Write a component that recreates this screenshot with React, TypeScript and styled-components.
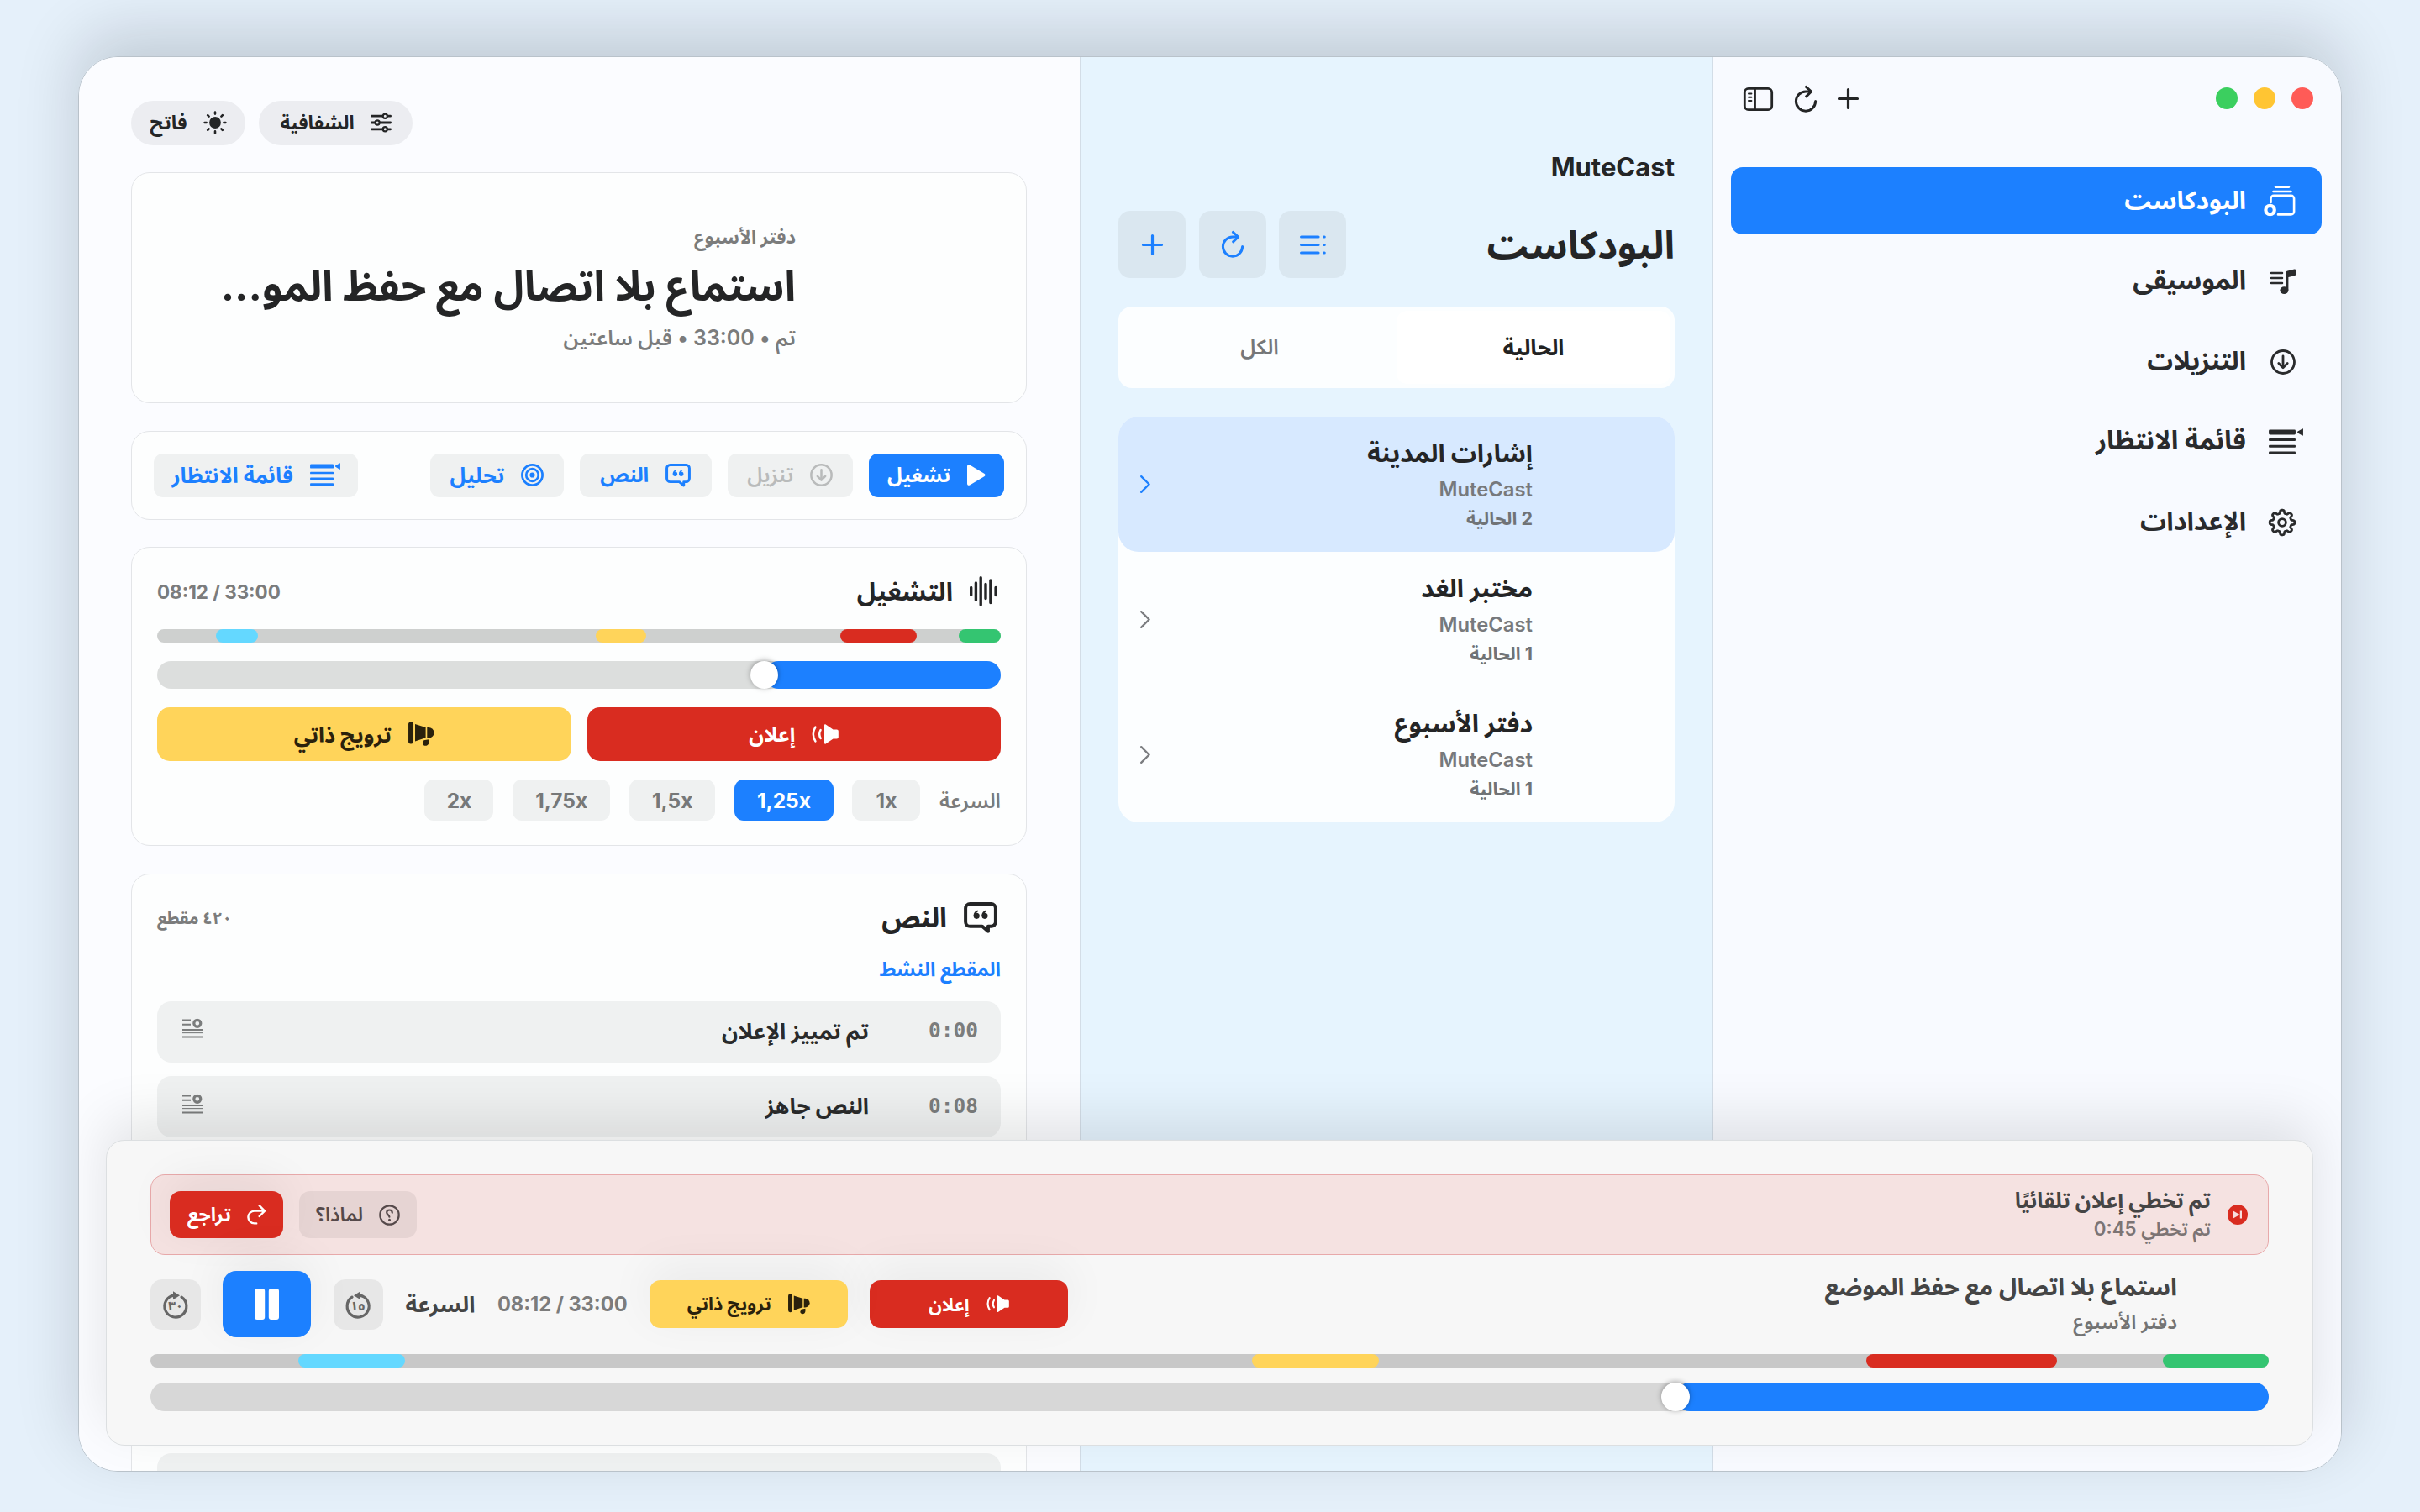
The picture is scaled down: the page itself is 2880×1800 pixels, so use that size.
import React from 'react';
import styled, { createGlobalStyle } from 'styled-components';

const BLUE = '#1c80ff';
const RED = '#d92c20';
const YELLOW = '#ffd45a';

const GlobalStyle = createGlobalStyle`
    * {
        box-sizing: border-box;
    }
    body {
        margin: 0;
        background: #e5f0fa;
        font-family: Inter, "Noto Sans Arabic", "DejaVu Sans", sans-serif;
        color: #242526;
        -webkit-font-smoothing: antialiased;
    }
    button {
        font-family: inherit;
        border: none;
        margin: 0;
        padding: 0;
        color: inherit;
        cursor: pointer;
    }
`;

/* ---------- shell ---------- */

const Page = styled.div`
    width: 2880px;
    height: 1800px;
    padding: 67px 93px 48px;
    overflow: hidden;
    direction: rtl;
`;

const Window = styled.div`
    position: relative;
    width: 2694px;
    height: 1685px;
    display: grid;
    grid-template-columns: 747px 754px 1fr;
    border: 1px solid #b9c2ca;
    border-radius: 47px;
    overflow: hidden;
    box-shadow: 0 -26px 76px rgba(0, 10, 25, 0.16);
`;

const Text = styled.span<{ size: number; weight?: number; tone?: string; lh?: number; ltr?: boolean }>`
    display: block;
    flex: none;
    font-size: ${p => p.size}px;
    font-weight: ${p => p.weight ?? 700};
    line-height: ${p => p.lh ?? Math.round(p.size * 1.4)}px;
    color: ${p => p.tone ?? 'inherit'};
    direction: ${p => (p.ltr ? 'ltr' : 'rtl')};
    white-space: nowrap;
`;

const Svg = styled.svg`
    display: block;
    flex: none;
    overflow: visible;
`;

/* ---------- sidebar ---------- */

const Sidebar = styled.aside`
    background: #f8faff;
    padding: 0 23px 0 21px;
`;

const TitleBar = styled.div`
    height: 131px;
    padding: 34px 10px 0 15px;
    display: flex;
    align-items: flex-start;
    justify-content: space-between;
`;

const Lights = styled.div`
    display: flex;
    gap: 19px;
    padding-top: 2px;
`;

const Light = styled.span<{ bg: string }>`
    width: 26px;
    height: 26px;
    border-radius: 50%;
    background: ${p => p.bg};
`;

const TitleTools = styled.div`
    height: 31px;
    display: flex;
    align-items: center;
    gap: 25.5px;
`;

const Nav = styled.nav`
    display: flex;
    flex-direction: column;
    gap: 15.5px;
`;

const NavItem = styled.div<{ active?: boolean }>`
    height: 80px;
    display: flex;
    align-items: center;
    padding: 0 22px 3px 0;
    border-radius: 14px;
    background: ${p => (p.active ? BLUE : 'transparent')};
    color: ${p => (p.active ? '#fff' : '#2a2b2d')};
`;

const NavIcon = styled.span<{ wide?: boolean }>`
    width: 68px;
    padding-top: 4px;
    padding-right: ${p => (p.wide ? 0 : 9)}px;
`;

/* ---------- podcast list ---------- */

const ListPane = styled.section`
    background: #e6f4fe;
    border-right: 1px solid #d3dde7;
    border-left: 1px solid #d3dde7;
    padding: 111px 45px 0 45px;
`;

const ListHeader = styled.div`
    height: 80px;
    margin-top: 32px;
    display: flex;
    align-items: center;
    justify-content: space-between;
`;

const SquareButtons = styled.div`
    display: flex;
    gap: 15.5px;
`;

const SquareButton = styled.button`
    width: 80px;
    height: 80px;
    border-radius: 14px;
    background: #dae7f0;
    color: ${BLUE};
    display: flex;
    align-items: center;
    justify-content: center;
`;

const Segmented = styled.div`
    height: 97px;
    margin-top: 34px;
    padding: 5px;
    display: flex;
    border-radius: 16px;
    background: #fcfeff;
`;

const Segment = styled.div<{ active?: boolean }>`
    flex: 1;
    display: flex;
    align-items: center;
    justify-content: center;
    border-radius: 13px;
    background: ${p => (p.active ? '#fff' : 'transparent')};
    color: ${p => (p.active ? '#222' : '#757779')};
`;

const ShowList = styled.div`
    margin-top: 34px;
    border-radius: 24px;
    background: #fcfeff;
`;

const ShowRow = styled.div<{ active?: boolean }>`
    height: 161px;
    display: flex;
    align-items: center;
    justify-content: space-between;
    padding: 0 169px 0 26px;
    border-radius: 24px;
    background: ${p => (p.active ? '#d7e9ff' : 'transparent')};
    color: ${p => (p.active ? BLUE : '#7b7d80')};
`;

const ShowText = styled.div`
    padding-bottom: 7px;
`;

/* ---------- detail ---------- */

const Detail = styled.main`
    background: #fbfcff;
    padding: 52px 63px 0 62px;
    display: flex;
    flex-direction: column;
    gap: 32.5px;
    min-height: 0;
    overflow: hidden;
`;

const Pills = styled.div`
    flex: none;
    display: flex;
    justify-content: flex-end;
    gap: 16px;
`;

const Pill = styled.button<{ w: number }>`
    width: ${p => p.w}px;
    height: 52.5px;
    border-radius: 27px;
    background: #ecedf1;
    display: flex;
    align-items: center;
    justify-content: center;
    gap: 19px;
`;

const Card = styled.section`
    flex: none;
    border: 1px solid #e3e5e8;
    border-radius: 22px;
    background: #fdfefe;
`;

const Hero = styled(Card)`
    height: 275px;
    padding: 58px 274px 0 0;
`;

const Toolbar = styled(Card)`
    height: 106px;
    padding: 0 26px;
    display: flex;
    align-items: center;
    gap: 19px;
`;

const ToolButton = styled.button<{ w: number; kind?: 'primary' | 'disabled' }>`
    width: ${p => p.w}px;
    height: 52px;
    border-radius: 11px;
    background: ${p => (p.kind === 'primary' ? BLUE : '#eff1f1')};
    color: ${p => (p.kind === 'primary' ? '#fff' : p.kind === 'disabled' ? '#b9bbbb' : BLUE)};
    display: flex;
    align-items: center;
    justify-content: center;
    gap: 20px;

    &:last-child {
        margin-right: auto;
    }
`;

const Panel = styled(Card)`
    padding: 29px 30px;
    display: flex;
    flex-direction: column;
    gap: 22px;
`;

const PanelHeader = styled.div`
    height: 46px;
    display: flex;
    align-items: center;
    justify-content: space-between;
`;

const PanelTitle = styled.div`
    display: flex;
    align-items: center;
    gap: 20px;
    padding-right: 4px;
`;

const Track = styled.div<{ tone: string }>`
    position: relative;
    flex: none;
    height: 16px;
    border-radius: 8px;
    background: ${p => p.tone};
`;

const Marker = styled.span<{ from: number; to: number; tone: string }>`
    position: absolute;
    top: 0;
    bottom: 0;
    right: ${p => p.from}%;
    width: ${p => p.to - p.from}%;
    border-radius: 8px;
    background: ${p => p.tone};
`;

const Slider = styled.div<{ h: number; tone: string }>`
    position: relative;
    flex: none;
    height: ${p => p.h}px;
    border-radius: 17px;
    background: ${p => p.tone};
`;

const Fill = styled.span`
    display: block;
    width: 28%;
    height: 100%;
    border-radius: 17px;
    background: ${BLUE};
`;

const Knob = styled.span<{ h: number }>`
    position: absolute;
    top: 0;
    right: 28%;
    width: ${p => p.h}px;
    height: ${p => p.h}px;
    margin-right: -${p => p.h / 2}px;
    border-radius: 50%;
    background: #fff;
    box-shadow: 0 -1px 6px rgba(0, 0, 0, 0.35);
`;

const Pair = styled.div`
    display: flex;
    gap: 19px;
`;

const TagButton = styled.button<{ tone: string; ink: string }>`
    flex: 1;
    height: 64px;
    border-radius: 15px;
    background: ${p => p.tone};
    color: ${p => p.ink};
    display: flex;
    align-items: center;
    justify-content: center;
    gap: 20px;
`;

const PlayerTag = styled(TagButton)`
    flex: none;
    width: 235.5px;
    height: 57px;
    border-radius: 13px;
    box-shadow: 0 -14px 56px rgba(0, 0, 0, 0.06);
`;

const Speeds = styled.div`
    height: 49px;
    display: flex;
    align-items: center;
    gap: 22.5px;
`;

const Speed = styled.button<{ w: number; active?: boolean }>`
    width: ${p => p.w}px;
    height: 49px;
    border-radius: 11px;
    display: flex;
    align-items: center;
    justify-content: center;
    background: ${p => (p.active ? BLUE : '#eff1f1')};
    color: ${p => (p.active ? '#fff' : '#767878')};
`;

const Segments = styled.div`
    display: flex;
    flex-direction: column;
    gap: 16.7px;
`;

const SegmentRow = styled.div`
    height: 73px;
    border-radius: 17px;
    background: #eff1f1;
    display: flex;
    align-items: center;
    padding: 0 27px 2px 30px;
    color: #7b7d7d;
`;

const Stamp = styled.span`
    width: 130px;
    font: 700 24.5px/34px "DejaVu Sans Mono", monospace;
`;

const RowEnd = styled.span`
    margin-right: auto;
    padding-bottom: 6px;
`;

/* ---------- player ---------- */

const Player = styled.section`
    position: absolute;
    left: 32px;
    right: 33px;
    bottom: 30px;
    height: 364px;
    padding: 40px 52px;
    border: 1px solid #dcdfe1;
    border-radius: 22px;
    background: #f7f7f7;
    box-shadow: 0 -24px 64px rgba(0, 0, 0, 0.1);
    color: #454545;
`;

const Banner = styled.div`
    height: 96px;
    padding: 0 24px 0 22px;
    border: 1px solid #e8a9aa;
    border-radius: 17px;
    background: #f5e2e1;
    display: flex;
    align-items: center;
    gap: 20px;
`;

const BannerActions = styled.div`
    margin-right: auto;
    display: flex;
    gap: 19px;
`;

const BannerButton = styled.button<{ w: number; solid?: boolean }>`
    width: ${p => p.w}px;
    height: 56px;
    border-radius: 13px;
    background: ${p => (p.solid ? RED : '#e6d4d3')};
    color: ${p => (p.solid ? '#fff' : '#55494a')};
    box-shadow: ${p => (p.solid ? '0 -10px 56px rgba(0, 0, 0, 0.07)' : 'none')};
    display: flex;
    align-items: center;
    justify-content: center;
    gap: 19px;
`;

const Controls = styled.div`
    height: 79px;
    margin: 19px 0 20px;
    display: flex;
    align-items: center;
    gap: 26.5px;
`;

const NowPlaying = styled.div`
    margin-left: auto;
    padding: 1px 109px 0 0;
`;

const SkipButton = styled.button`
    width: 59.5px;
    height: 60px;
    border-radius: 14px;
    background: #e7e7e7;
    color: #666;
    display: flex;
    align-items: center;
    justify-content: center;
`;

const PauseButton = styled.button`
    width: 105px;
    height: 79px;
    border-radius: 16px;
    background: ${BLUE};
    color: #fff;
    box-shadow: 0 -14px 56px rgba(0, 0, 0, 0.06);
    display: flex;
    align-items: center;
    justify-content: center;
`;

const PlayerSlider = styled.div`
    margin-top: 18px;
`;

/* ---------- icons ---------- */

function SidebarIcon() {
    return (
        <Svg width="35" height="28" viewBox="0 0 35 28" fill="none" stroke="currentColor" strokeWidth="2.8" strokeLinecap="round">
            <rect x="1.3" y="1.3" width="32.4" height="25.4" rx="4.5" />
            <path d="M13.5 1.3v25.4" />
            <path d="M6 7.5h3.4M6 11.7h3.4M6 15.9h3.4" strokeWidth="2" />
        </Svg>
    );
}

function ReloadIcon() {
    return (
        <Svg width="26" height="32" viewBox="0 0 26 32" fill="none" stroke="currentColor" strokeWidth="3" strokeLinecap="round" strokeLinejoin="round">
            <path d="M24.6 18.6A11.6 11.6 0 1 1 13 7h5.6" />
            <path d="M13.4 1.4L19.6 7l-6 5.8" />
        </Svg>
    );
}

function PlusIcon() {
    return (
        <Svg width="25" height="25" viewBox="0 0 25 25" fill="none" stroke="currentColor" strokeWidth="3.2" strokeLinecap="round">
            <path d="M12.5 1.5v22M1.5 12.5h22" />
        </Svg>
    );
}

function BulletsIcon() {
    return (
        <Svg width="31" height="23" viewBox="0 0 31 23" fill="none" stroke="currentColor" strokeWidth="3.2" strokeLinecap="round">
            <path d="M1.6 2h20.4M1.6 11.5h20.4M1.6 21h20.4M28.6 2h.6M28.6 11.5h.6M28.6 21h.6" />
        </Svg>
    );
}

function StackIcon() {
    return (
        <Svg width="38" height="37" viewBox="0 0 38 37" fill="none" stroke="currentColor" strokeLinecap="round">
            <path d="M14 1.6h16M11.5 7h21" strokeWidth="2.6" />
            <path d="M8.5 20v-4.6a3.6 3.6 0 0 1 3.6-3.6h20.4a3.6 3.6 0 0 1 3.6 3.6v15.4a3.6 3.6 0 0 1-3.6 3.6H17" strokeWidth="2.6" />
            <circle cx="7.6" cy="29" r="5.2" strokeWidth="4.2" />
        </Svg>
    );
}

function MusicListIcon() {
    return (
        <Svg width="30" height="31" viewBox="0 0 30 31" fill="currentColor">
            <path d="M1 5h13M1 11h13M1 17h13" stroke="currentColor" strokeWidth="2.5" strokeLinecap="round" />
            <ellipse cx="16.4" cy="25.6" rx="5" ry="4.4" />
            <path d="M18.6 25.6V4.6c0-1.2.6-1.9 1.8-2.2l8-1.8c1-.2 1.6.2 1.6 1.2v5c0 .8-.4 1.3-1.2 1.5l-7.4 1.8v15.5z" />
        </Svg>
    );
}

function DownloadIcon({ size = 30 }: { size?: number }) {
    return (
        <Svg width={size} height={size} viewBox="0 0 30 30" fill="none" stroke="currentColor" strokeWidth="2.8" strokeLinecap="round" strokeLinejoin="round">
            <circle cx="15" cy="15" r="13.5" />
            <path d="M15 8v13.4M9.8 16.6l5.2 5.2 5.2-5.2" />
        </Svg>
    );
}

function QueueIcon({ size = 41 }: { size?: number }) {
    return (
        <Svg width={size} height={size * 0.73} viewBox="0 0 41 30" fill="currentColor">
            <rect x="0" y="0.6" width="32" height="5.8" rx="1.4" />
            <rect x="0" y="11" width="32" height="3.1" rx="1" />
            <rect x="0" y="18.8" width="32" height="3.1" rx="1" />
            <rect x="0" y="26.6" width="32" height="3.1" rx="1" />
            <path d="M34.6 2.600L40 -0.600c.6-.3 1 0 1 .6v7c0 .6-.4.9-1 .6l-5.400-3.200c-.6-.5-.6-1.300 0-1.800z" />
        </Svg>
    );
}

// eight soft teeth drawn as one closed curve around the hub
const gearPath = Array.from({ length: 160 }, (_, i) => {
    const a = (i / 160) * Math.PI * 2;
    const r = 12.9 + 1.9 * Math.tanh(2.6 * Math.cos(a * 8));
    return `${i ? 'L' : 'M'}${(16 + r * Math.sin(a)).toFixed(2)} ${(16 - r * Math.cos(a)).toFixed(2)}`;
}).join('') + 'Z';

function GearIcon() {
    return (
        <Svg width="32" height="32" viewBox="0 0 32 32" fill="none" stroke="currentColor" strokeWidth="2.8" strokeLinejoin="round">
            <path d={gearPath} />
            <circle cx="16" cy="16" r="4.4" />
        </Svg>
    );
}

function SlidersIcon() {
    return (
        <Svg width="25" height="22" viewBox="0 0 25 22" fill="none" stroke="currentColor" strokeWidth="2.8" strokeLinecap="round">
            <path d="M1.4 3.2h12.400M20.800 3.2h2.800M1.400 11h3.200M11.600 11h12M1.400 18.800h12.400M20.800 18.800h2.800" />
            <g strokeWidth="2.200">
                <circle cx="17.300" cy="3.200" r="2.600" />
                <circle cx="8.100" cy="11" r="2.600" />
                <circle cx="17.300" cy="18.800" r="2.600" />
            </g>
        </Svg>
    );
}

function SunIcon() {
    return (
        <Svg width="28" height="28" viewBox="0 0 28 28" fill="currentColor" stroke="currentColor" strokeWidth="2.600" strokeLinecap="round">
            <circle cx="14" cy="14" r="6.900" stroke="none" />
            <path d="M14 1.600v2M14 24.400v2M1.600 14h2M24.400 14h2M5.200 5.200l1.400 1.400M21.400 21.400l1.400 1.400M5.200 22.800l1.400-1.400M21.400 6.600l1.400-1.400" />
        </Svg>
    );
}

function PlayIcon() {
    return (
        <Svg width="22" height="25" viewBox="0 0 22 25" fill="currentColor">
            <path d="M0 2.200C0 .4 1.600-.4 3.100.5l17.200 10.200c1.600.9 1.600 2.700 0 3.600L3.100 24.500C1.600 25.400 0 24.600 0 22.800z" />
        </Svg>
    );
}

function QuoteIcon({ size }: { size: number }) {
    return (
        <Svg width={size} height={size * 0.92} viewBox="0 0 40 37" fill="none" stroke="currentColor" strokeWidth="4" strokeLinejoin="round">
            <path d="M7.400 2h25.200A5.400 5.400 0 0 1 38 7.400v16.200a5.400 5.400 0 0 1-5.400 5.400H29v6L22 29H7.400A5.400 5.400 0 0 1 2 23.600V7.400A5.400 5.400 0 0 1 7.400 2z" />
            <g fill="currentColor" stroke="none">
                <circle cx="15.200" cy="16.400" r="3.600" />
                <circle cx="25" cy="16.400" r="3.600" />
                <path d="M11.600 16.400c0-3.600 1.800-5.800 4.800-6.800l.8 1.500c-1.600.8-2.600 2-2.800 3.700zM21.400 16.400c0-3.600 1.800-5.800 4.800-6.800l.8 1.500c-1.600.8-2.600 2-2.800 3.700z" />
            </g>
        </Svg>
    );
}

function TargetIcon() {
    return (
        <Svg width="27" height="27" viewBox="0 0 27 27" fill="none" stroke="currentColor" strokeWidth="2.700">
            <circle cx="13.500" cy="13.500" r="12.100" />
            <circle cx="13.500" cy="13.500" r="7.300" />
            <circle cx="13.500" cy="13.500" r="3.100" fill="currentColor" stroke="none" />
        </Svg>
    );
}

function WaveIcon() {
    return (
        <Svg width="33" height="36" viewBox="0 0 33 36" stroke="currentColor" strokeWidth="3.400" strokeLinecap="round">
            <path d="M1.700 13.500v9M7.400 8v20.500M13.200 1.700v32.600M19 9.500v17M24.900 5v26.500M31.100 13.500v9" />
        </Svg>
    );
}

function SpeakerIcon({ size = 32 }: { size?: number }) {
    return (
        <Svg width={size} height={size * 0.75} viewBox="0 0 32 24" fill="currentColor">
            <path d="M15 1.400c0-1 .9-1.400 1.700-.8l8.800 5.800h4.300c1.200 0 2 .8 2 2v7.200c0 1.200-.8 2-2 2h-4.300l-8.800 5.800c-.8.6-1.700.2-1.700-.8z" />
            <path d="M10.600 7c-1.800 3.200-1.800 6.800 0 10M4.400 3.600c-3.200 5.200-3.200 11.600 0 16.800" fill="none" stroke="currentColor" strokeWidth="2.500" strokeLinecap="round" />
        </Svg>
    );
}

function MegaphoneIcon({ size = 31 }: { size?: number }) {
    return (
        <Svg width={size} height={size * 0.95} viewBox="0 0 31 29.500" fill="currentColor">
            <rect x="0" y="0.500" width="6" height="26" rx="2.800" />
            <path d="M8 3l12.600 4v12.400L8 23.600z" />
            <path d="M22.300 7h1.700a6.600 6.300 0 0 1 0 12.600h-1.700z" />
            <path d="M18.400 22.400l6-1.200v3.800c-.6 5-6.800 5-7.400 1z" />
        </Svg>
    );
}

function ChevronIcon() {
    return (
        <Svg width="12" height="21" viewBox="0 0 12 21" fill="none" stroke="currentColor" strokeWidth="2.400" strokeLinecap="round" strokeLinejoin="round">
            <path d="M1.200 1.200l9.400 9.300-9.400 9.300" />
        </Svg>
    );
}

function NoteIcon() {
    return (
        <Svg width="24" height="24" viewBox="0 0 24 24" fill="none" stroke="currentColor" strokeWidth="2">
            <path d="M0 2.400h10M0 7.800h10M0 14h24M0 22.600h24" />
            <path d="M0 17.600h24" strokeWidth="1.100" />
            <circle cx="17.800" cy="6.300" r="4" strokeWidth="3.200" />
        </Svg>
    );
}

function SkipBadgeIcon() {
    return (
        <Svg width="24" height="24" viewBox="0 0 24 24">
            <circle cx="12" cy="12" r="12" fill={RED} />
            <path d="M6.600 7.600l8 4.400-8 4.400zM14.800 7.600h2.200v8.800h-2.200z" fill="#f7dfde" />
        </Svg>
    );
}

function QuestionIcon() {
    return (
        <Svg width="25" height="25" viewBox="0 0 25 25" fill="none" stroke="currentColor" strokeWidth="2.200">
            <circle cx="12.500" cy="12.500" r="11.200" />
            <path d="M15.800 9.800c0-2-1.400-3.300-3.300-3.300-2 0-3.300 1.200-3.300 3 0 2.600 3.200 2.500 3.200 5.200" strokeLinecap="round" />
            <circle cx="12.500" cy="18.200" r="1.500" fill="currentColor" stroke="none" />
        </Svg>
    );
}

function UturnIcon() {
    return (
        <Svg width="22" height="24" viewBox="0 0 22 24" fill="none" stroke="currentColor" strokeWidth="2.400" strokeLinecap="round" strokeLinejoin="round">
            <path d="M14.600 1.200L21 7.600l-6.400 6.400M20.600 7.600H8.800a7.400 7.400 0 0 0 0 14.800h2.400" />
        </Svg>
    );
}

function SkipIcon({ label, back }: { label: string; back?: boolean }) {
    const ring = back ? 'M17 5.200A13 13 0 1 1 8 7.200' : 'M13 5.200A13 13 0 1 0 22 7.200';
    const head = back ? 'M10 5.200L18 .2v10z' : 'M20 5.200L12 .2v10z';
    return (
        <Svg width="30" height="32" viewBox="0 0 30 32">
            <path d={ring} fill="none" stroke="currentColor" strokeWidth="3.200" strokeLinecap="round" />
            <path d={head} fill="currentColor" />
            <text x="15" y="23" textAnchor="middle" fontSize="15" fontWeight="800" fill="currentColor" direction="ltr">{label}</text>
        </Svg>
    );
}

function PauseIcon() {
    return (
        <Svg width="29" height="37" viewBox="0 0 29 37" fill="currentColor">
            <rect x="0" y="0" width="12.200" height="37" rx="3" />
            <rect x="16.800" y="0" width="12.200" height="37" rx="3" />
        </Svg>
    );
}

/* ---------- data ---------- */

const navItems = [
    { label: 'البودكاست', size: 29.8, icon: <StackIcon />, active: true },
    { label: 'الموسيقى', size: 30.6, icon: <MusicListIcon /> },
    { label: 'التنزيلات', size: 30.6, icon: <DownloadIcon /> },
    { label: 'قائمة الانتظار', size: 31.5, icon: <QueueIcon />, wide: true },
    { label: 'الإعدادات', size: 30.6, icon: <GearIcon /> },
];

const shows = [
    { title: 'إشارات المدينة', count: '2 الحالية', active: true },
    { title: 'مختبر الغد', count: '1 الحالية' },
    { title: 'دفتر الأسبوع', count: '1 الحالية' },
];

const markers = [
    { from: 0, to: 5, tone: '#34c571' },
    { from: 10, to: 19, tone: RED },
    { from: 42, to: 48, tone: YELLOW },
    { from: 88, to: 93, tone: '#64d8ff' },
];

const speeds = [
    { label: '1x', w: 81 },
    { label: '1,25x', w: 118, active: true },
    { label: '1,5x', w: 102.5 },
    { label: '1,75x', w: 116.5 },
    { label: '2x', w: 82 },
];

const segments = [
    { time: '0:00', text: 'تم تمييز الإعلان' },
    { time: '0:08', text: 'النص جاهز' },
];

function MarkerTrack({ tone }: { tone: string }) {
    return (
        <Track tone={tone}>
            {markers.map(m => <Marker key={m.from} {...m} />)}
        </Track>
    );
}

function Seek({ h, tone }: { h: number; tone: string }) {
    return (
        <Slider h={h} tone={tone}>
            <Fill />
            <Knob h={h} />
        </Slider>
    );
}

export default function App() {
    return (
        <Page>
            <GlobalStyle />
            <Window>
                <Sidebar>
                    <TitleBar>
                        <Lights>
                            <Light bg="#ff5b57" />
                            <Light bg="#ffc533" />
                            <Light bg="#3bcf5f" />
                        </Lights>
                        <TitleTools>
                            <PlusIcon />
                            <ReloadIcon />
                            <SidebarIcon />
                        </TitleTools>
                    </TitleBar>
                    <Nav>
                        {navItems.map(item => (
                            <NavItem key={item.label} active={item.active}>
                                <NavIcon wide={item.wide}>{item.icon}</NavIcon>
                                <Text size={item.size} lh={44}>{item.label}</Text>
                            </NavItem>
                        ))}
                    </Nav>
                </Sidebar>

                <ListPane>
                    <Text size={31} lh={40}>MuteCast</Text>
                    <ListHeader>
                        <Text size={46} lh={76}>البودكاست</Text>
                        <SquareButtons>
                            <SquareButton><BulletsIcon /></SquareButton>
                            <SquareButton><ReloadIcon /></SquareButton>
                            <SquareButton><PlusIcon /></SquareButton>
                        </SquareButtons>
                    </ListHeader>
                    <Segmented>
                        <Segment active><Text size={26}>الحالية</Text></Segment>
                        <Segment><Text size={25} weight={600}>الكل</Text></Segment>
                    </Segmented>
                    <ShowList>
                        {shows.map(show => (
                            <ShowRow key={show.title} active={show.active}>
                                <ShowText>
                                    <Text size={30.2} lh={48} tone="#242526">{show.title}</Text>
                                    <Text size={23.8} weight={600} lh={40} tone="#77797c">MuteCast</Text>
                                    <Text size={21.5} lh={28} tone="#707376">{show.count}</Text>
                                </ShowText>
                                <ChevronIcon />
                            </ShowRow>
                        ))}
                    </ShowList>
                </ListPane>

                <Detail>
                    <Pills>
                        <Pill w={183}><SlidersIcon /><Text size={22.6}>الشفافية</Text></Pill>
                        <Pill w={136}><SunIcon /><Text size={23}>فاتح</Text></Pill>
                    </Pills>

                    <Hero>
                        <Text size={22.2} lh={36} tone="#7b7c7c">دفتر الأسبوع</Text>
                        <Text size={49.2} lh={80}>استماع بلا اتصال مع حفظ المو...</Text>
                        <Text size={25} weight={600} lh={44} tone="#7b7c7c">تم • 33:00 • قبل ساعتين</Text>
                    </Hero>

                    <Toolbar>
                        <ToolButton w={161} kind="primary"><PlayIcon /><Text size={24}>تشغيل</Text></ToolButton>
                        <ToolButton w={149.5} kind="disabled"><DownloadIcon size={27} /><Text size={25} weight={600}>تنزيل</Text></ToolButton>
                        <ToolButton w={156.5}><QuoteIcon size={30} /><Text size={24.2}>النص</Text></ToolButton>
                        <ToolButton w={159}><TargetIcon /><Text size={25.4}>تحليل</Text></ToolButton>
                        <ToolButton w={243}><QueueIcon size={36} /><Text size={25.5}>قائمة الانتظار</Text></ToolButton>
                    </Toolbar>

                    <Panel>
                        <PanelHeader>
                            <PanelTitle><WaveIcon /><Text size={30.5} lh={46}>التشغيل</Text></PanelTitle>
                            <Text size={22.4} tone="#7b7c7c" ltr>08:12 / 33:00</Text>
                        </PanelHeader>
                        <MarkerTrack tone="#ced0cf" />
                        <Seek h={33} tone="#dcdedd" />
                        <Pair>
                            <TagButton tone={RED} ink="#fff"><SpeakerIcon /><Text size={24.5}>إعلان</Text></TagButton>
                            <TagButton tone={YELLOW} ink="#2a210c"><MegaphoneIcon /><Text size={25.3}>ترويج ذاتي</Text></TagButton>
                        </Pair>
                        <Speeds>
                            <Text size={24.6} weight={600} tone="#7b7c7c">السرعة</Text>
                            {speeds.map(s => (
                                <Speed key={s.label} w={s.w} active={s.active}><Text size={24.5} ltr>{s.label}</Text></Speed>
                            ))}
                        </Speeds>
                    </Panel>

                    <Panel>
                        <PanelHeader>
                            <PanelTitle><QuoteIcon size={40} /><Text size={32.5} lh={42}>النص</Text></PanelTitle>
                            <Text size={20.3} tone="#7b7c7c">٤٢٠ مقطع</Text>
                        </PanelHeader>
                        <Text size={23.6} lh={32} tone={BLUE}>المقطع النشط</Text>
                        <Segments>
                            {segments.map(s => (
                                <SegmentRow key={s.time}>
                                    <Stamp>{s.time}</Stamp>
                                    <Text size={26.4} tone="#2a2b2b">{s.text}</Text>
                                    <RowEnd><NoteIcon /></RowEnd>
                                </SegmentRow>
                            ))}
                            <SegmentRow />
                            <SegmentRow />
                            <SegmentRow />
                            <SegmentRow />
                            <SegmentRow />
                        </Segments>
                    </Panel>
                </Detail>

                <Player>
                    <Banner>
                        <SkipBadgeIcon />
                        <div>
                            <Text size={25.5} lh={34}>تم تخطي إعلان تلقائيًا</Text>
                            <Text size={22.3} weight={600} lh={34} tone="#7c7474">تم تخطي 0:45</Text>
                        </div>
                        <BannerActions>
                            <BannerButton w={140}><QuestionIcon /><Text size={23} weight={600}>لماذا؟</Text></BannerButton>
                            <BannerButton w={135} solid><UturnIcon /><Text size={23}>تراجع</Text></BannerButton>
                        </BannerActions>
                    </Banner>
                    <Controls>
                        <NowPlaying>
                            <Text size={29} lh={42}>استماع بلا اتصال مع حفظ الموضع</Text>
                            <Text size={23.6} weight={600} lh={42} tone="#747474">دفتر الأسبوع</Text>
                        </NowPlaying>
                        <PlayerTag tone={RED} ink="#fff"><SpeakerIcon size={27} /><Text size={21.5}>إعلان</Text></PlayerTag>
                        <PlayerTag tone={YELLOW} ink="#2a210c"><MegaphoneIcon size={26} /><Text size={21.8}>ترويج ذاتي</Text></PlayerTag>
                        <Text size={23.6} tone="#7c7c7c" ltr>08:12 / 33:00</Text>
                        <Text size={26.5}>السرعة</Text>
                        <SkipButton><SkipIcon label="١٥" back /></SkipButton>
                        <PauseButton><PauseIcon /></PauseButton>
                        <SkipButton><SkipIcon label="٣٠" /></SkipButton>
                    </Controls>
                    <MarkerTrack tone="#c8c8c8" />
                    <PlayerSlider><Seek h={34} tone="#d7d7d7" /></PlayerSlider>
                </Player>
            </Window>
        </Page>
    );
}
